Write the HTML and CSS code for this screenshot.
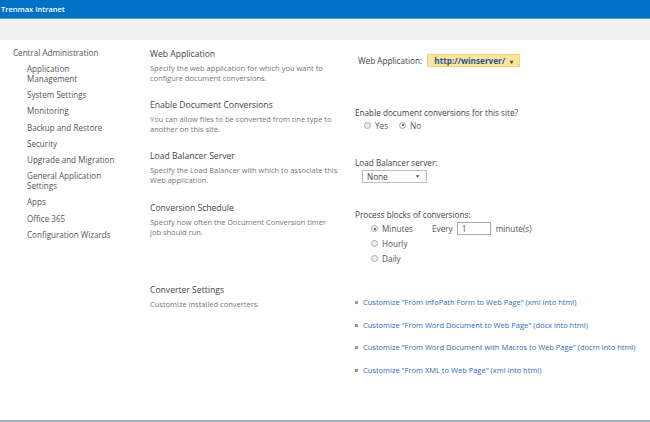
FILE: index.html
```html
<!DOCTYPE html>
<html lang="en">
  <head>
    <meta charset="UTF-8" />
    <meta name="viewport" content="width=device-width, initial-scale=1.0" />
    <title>Document Conversions</title>
    <link rel="stylesheet" href="styles.css">
  </head>
  <body>
    <div class="page">
      <div class="suitebar">Trenmax Intranet</div>
      <div class="ribbon"></div>

      <div class="main">
        <ul class="nav">
          <li class="nav-root">Central Administration</li>
          <li>Application<br />Management</li>
          <li>System Settings</li>
          <li>Monitoring</li>
          <li>Backup and Restore</li>
          <li>Security</li>
          <li>Upgrade and Migration</li>
          <li>General Application<br />Settings</li>
          <li>Apps</li>
          <li>Office 365</li>
          <li>Configuration Wizards</li>
        </ul>

        <div class="content">
          <div class="section s-webapp">
            <div class="desc">
              <div class="heading">Web Application</div>
              <p>Specify the web application for which you want to configure document conversions.</p>
            </div>
            <div class="control">
              <span class="label-inline">Web Application:</span>
              <span class="picker">http://winserver/ <span class="caret">&#9662;</span></span>
            </div>
          </div>

          <div class="section s-enable">
            <div class="desc">
              <div class="heading">Enable Document Conversions</div>
              <p>You can allow files to be converted from one type to another on this site.</p>
            </div>
            <div class="control">
              <div class="label">Enable document conversions for this site?</div>
              <div class="radio-row">
                <span class="radio"></span>Yes
                <span class="radio checked gap"></span>No
              </div>
            </div>
          </div>

          <div class="section s-balancer">
            <div class="desc">
              <div class="heading">Load Balancer Server</div>
              <p>Specify the Load Balancer with which to associate this Web application.</p>
            </div>
            <div class="control">
              <div class="label">Load Balancer server:</div>
              <div class="select">None <span class="arrow">&#9660;</span></div>
            </div>
          </div>

          <div class="section s-schedule">
            <div class="desc">
              <div class="heading">Conversion Schedule</div>
              <p>Specify how often the Document Conversion timer<br />job should run.</p>
            </div>
            <div class="control">
              <div class="label">Process blocks of conversions:</div>
              <div class="schedule">
                <div class="radio-col">
                  <div class="option"><span class="radio checked"></span>Minutes</div>
                  <div class="option"><span class="radio"></span>Hourly</div>
                  <div class="option"><span class="radio"></span>Daily</div>
                </div>
                <div class="every">
                  Every <span class="textbox">1</span> minute(s)
                </div>
              </div>
            </div>
          </div>

          <div class="section s-converters">
            <div class="desc">
              <div class="heading">Converter Settings</div>
              <p>Customize installed converters.</p>
            </div>
            <div class="control">
              <ul class="links">
                <li><a href="#">Customize "From InfoPath Form to Web Page" (xml into html)</a></li>
                <li><a href="#">Customize "From Word Document to Web Page" (docx into html)</a></li>
                <li><a href="#">Customize "From Word Document with Macros to Web Page" (docm into html)</a></li>
                <li><a href="#">Customize "From XML to Web Page" (xml into html)</a></li>
              </ul>
            </div>
          </div>
        </div>
      </div>

      <div class="footer"></div>
    </div>
  </body>
</html>
```

FILE: styles.css
```css
* {
  box-sizing: border-box;
}
body {
  margin: 0;
  font-family: "Open Sans", "Noto Sans", sans-serif;
  color: #444;
  background: #fff;
}
.page {
  min-height: 100vh;
  display: flex;
  flex-direction: column;
}
.suitebar {
  height: 19px;
  background: #0072c6;
  border-bottom: 1px solid #5b9fd6;
  color: #fff;
  font-size: 7.5px;
  font-weight: 600;
  line-height: 18px;
  padding-left: 1px;
}
.ribbon {
  height: 21px;
  background: #f1f1f1;
}
.main {
  display: flex;
  padding-top: 8px;
}
.nav {
  list-style: none;
  margin: 0;
  padding: 0 0 0 27px;
  width: 150px;
  font-size: 8.1px;
  color: #555;
}
.nav li {
  line-height: 10px;
  margin-bottom: 6.2px;
}
.nav .nav-root {
  margin-left: -14px;
  margin-bottom: 6px;
}
.content {
  flex: 1;
}
.section {
  display: flex;
}
.desc {
  width: 205px;
}
.heading {
  font-size: 8.6px;
  line-height: 12px;
  color: #444;
}
.desc p {
  margin: 3px 0 0;
  width: 191px;
  font-size: 7.5px;
  line-height: 10px;
  color: #777;
}
.control {
  padding-top: 7px;
  font-size: 8.2px;
  color: #444;
}
.s-webapp {
  height: 51px;
}
.s-webapp .control {
  padding-top: 6px;
}
.s-enable {
  height: 51px;
}
.s-enable .control {
  padding-top: 8px;
}
.s-balancer {
  height: 52px;
}
.s-schedule {
  height: 82px;
}
.label {
  line-height: 11px;
}
.label-inline {
  margin-left: 3px;
}
.picker {
  display: inline-block;
  margin-left: 3px;
  height: 13px;
  width: 93px;
  line-height: 12px;
  padding-left: 6px;
  background: #fbe49b;
  border: 1px solid #f0d27a;
  color: #1f5590;
  font-weight: 700;
}
.caret {
  font-size: 6px;
  margin-left: 3px;
  color: #444;
}
.radio-row {
  display: flex;
  align-items: center;
  margin-left: 9px;
  height: 14px;
  color: #555;
}
.radio {
  display: inline-block;
  width: 7px;
  height: 7px;
  border: 1px solid #aaa;
  border-radius: 50%;
  background: #eee;
  margin-right: 4px;
  position: relative;
}
.radio.checked::after {
  content: "";
  position: absolute;
  left: 1.5px;
  top: 1.5px;
  width: 2px;
  height: 2px;
  border-radius: 50%;
  background: #444;
}
.radio.gap {
  margin-left: 11px;
}
.select {
  margin-left: 7px;
  margin-top: 2px;
  width: 65px;
  height: 13px;
  border: 1px solid #bbb;
  line-height: 11px;
  padding-left: 4px;
  position: relative;
  color: #444;
}
.select .arrow {
  position: absolute;
  right: 6px;
  top: 0;
  font-size: 5px;
}
.schedule {
  display: flex;
  margin-left: 16px;
  margin-top: 1px;
}
.radio-col {
  width: 61px;
}
.option {
  display: flex;
  align-items: center;
  height: 15px;
  color: #555;
}
.every {
  display: flex;
  align-items: center;
  height: 15px;
  color: #555;
}
.textbox {
  display: inline-block;
  width: 34px;
  height: 13px;
  border: 1px solid #aaa;
  margin: 0 5px 0 4px;
  line-height: 11px;
  padding-left: 4px;
}
.links {
  list-style: none;
  margin: 6px 0 0;
  padding: 0;
}
.links li {
  height: 22.5px;
  line-height: 11px;
  font-size: 7.5px;
  display: flex;
  align-items: flex-start;
}
.links li::before {
  content: "";
  width: 3px;
  height: 3px;
  background: #999;
  margin: 4px 5px 0 0;
  flex: none;
}
.links a {
  color: #2a6ebb;
  text-decoration: none;
  white-space: nowrap;
}
.footer {
  margin-top: auto;
  height: 2px;
  background: #9db2c2;
}
```
